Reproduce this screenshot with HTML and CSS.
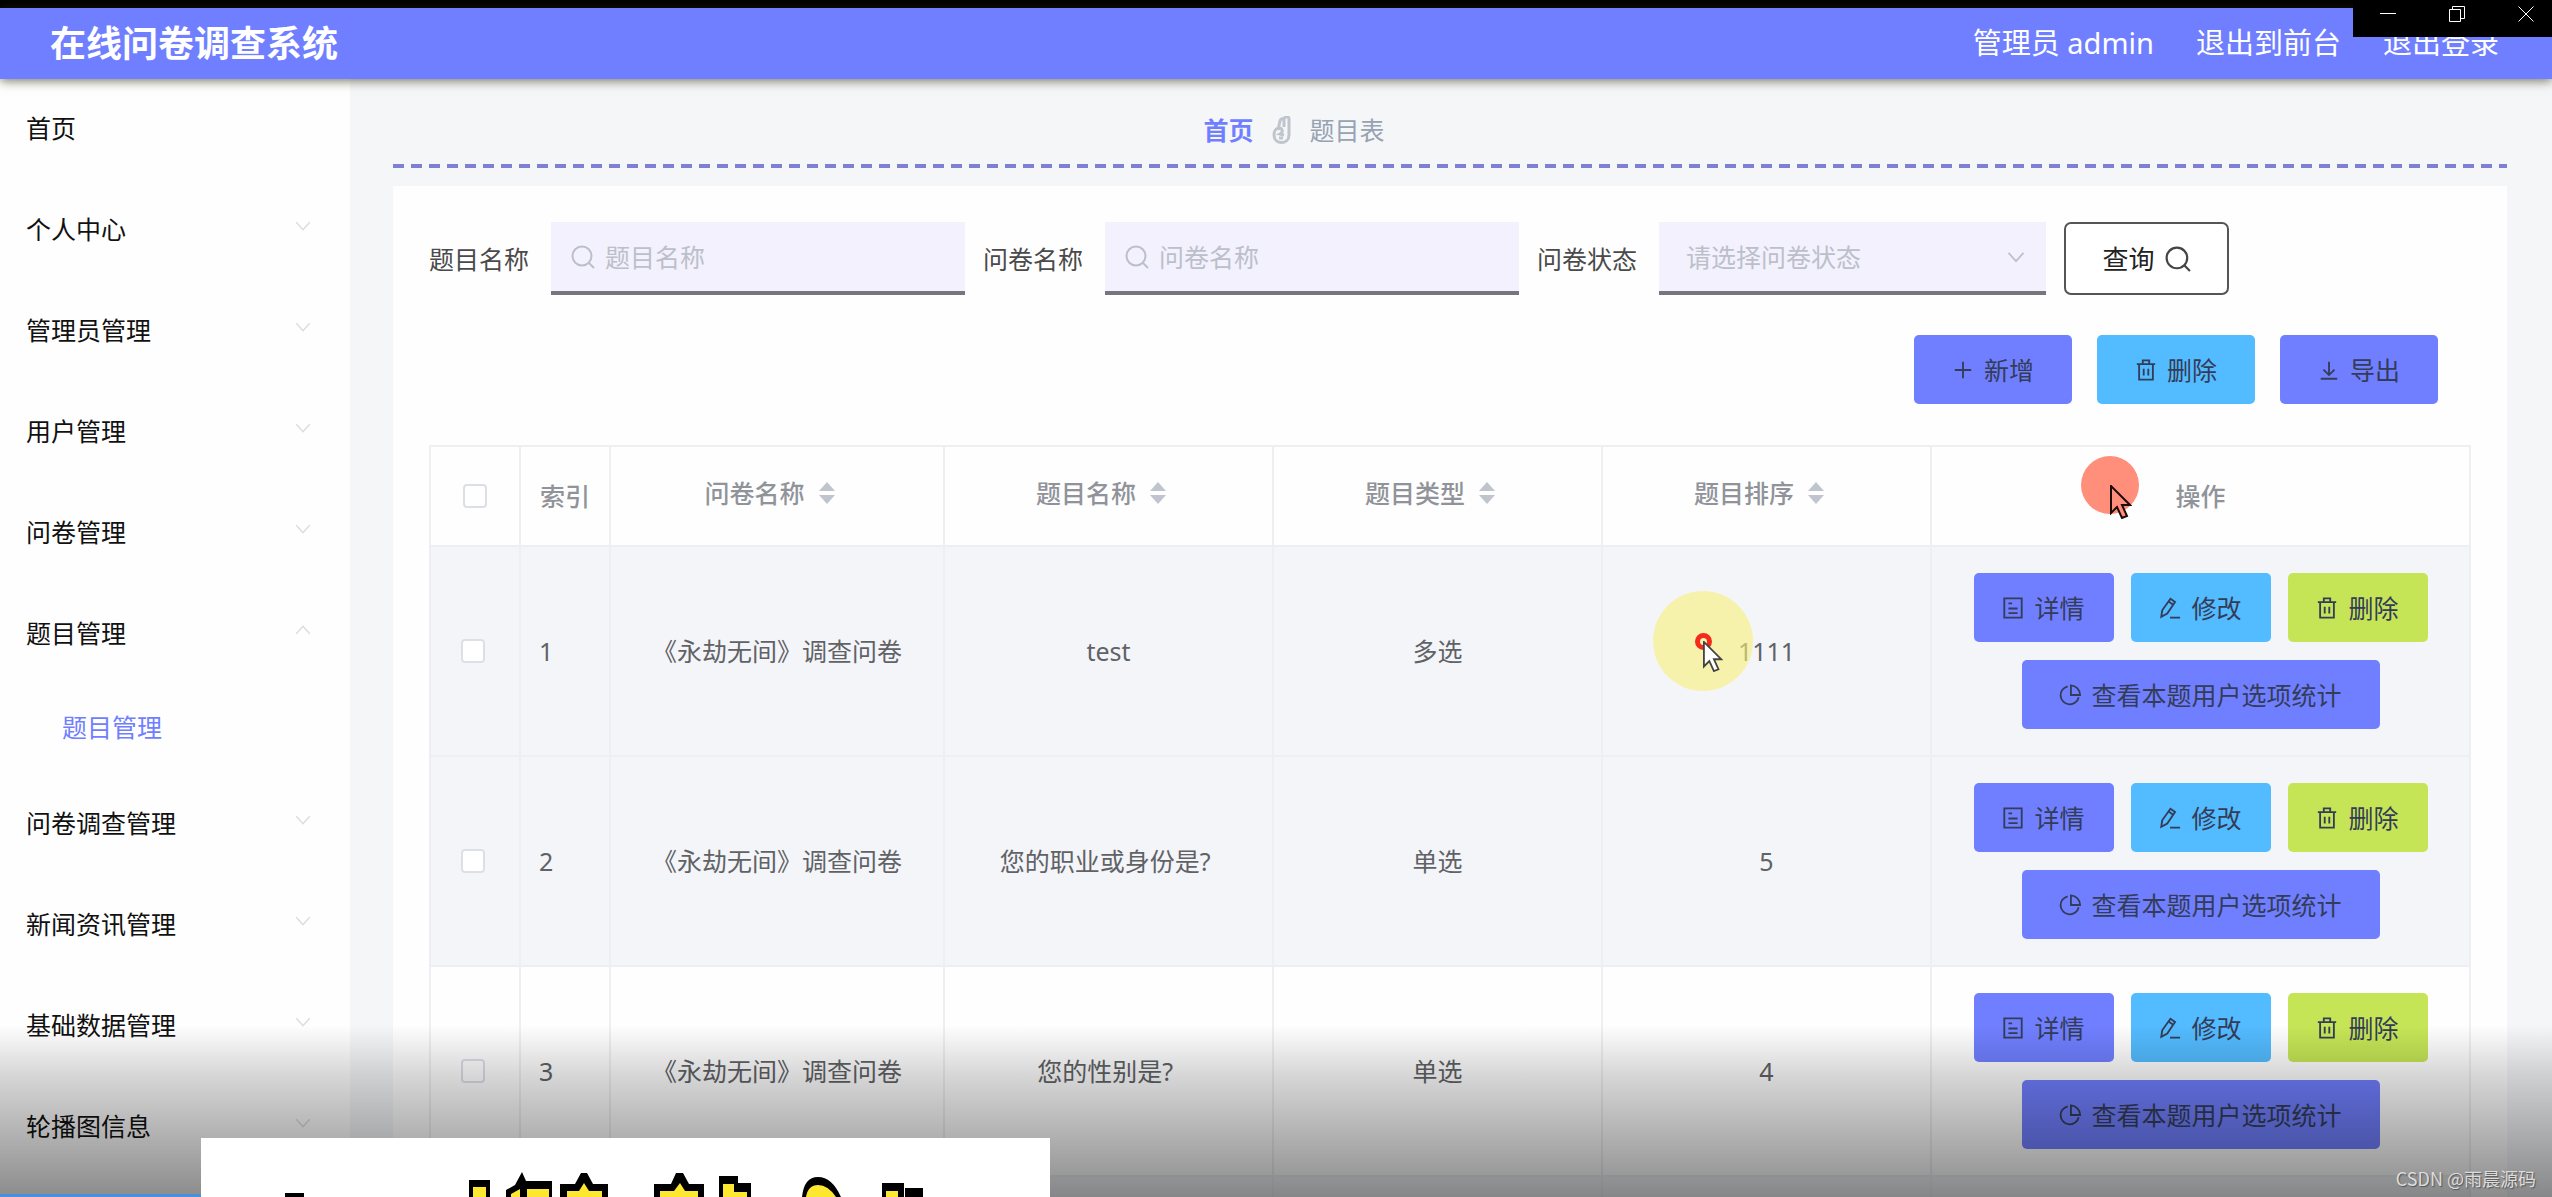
FILE: index.html
```html
<!DOCTYPE html>
<html lang="zh-CN">
<head>
<meta charset="utf-8">
<title>在线问卷调查系统</title>
<link rel="stylesheet" href="styles.css">
</head>
<body>
<svg class="sprite" aria-hidden="true">
  <symbol id="i-search" viewBox="0 0 24 24"><circle cx="11" cy="11" r="9.5"/><path d="M18 18l5 5"/></symbol>
  <symbol id="i-down" viewBox="0 0 24 24"><path d="M3 7l9 10 9-10"/></symbol>
  <symbol id="i-up" viewBox="0 0 24 24"><path d="M3 17l9-10 9 10"/></symbol>
  <symbol id="i-plus" viewBox="0 0 24 24"><path d="M12 3v18M3 12h18"/></symbol>
  <symbol id="i-trash" viewBox="0 0 24 24"><path d="M2 5.500h20M8.500 5V1.500h7V5M4.500 6v16.500h15V6M9.500 10.500v7.500M14.500 10.500v7.500"/></symbol>
  <symbol id="i-export" viewBox="0 0 24 24"><path d="M12 3v14M6 11.500l6 6 6-6M3 21.500h18"/></symbol>
  <symbol id="i-doc" viewBox="0 0 24 24"><path d="M2.500 1.500h19v21h-19zM7 7h4M7 12.500h10M7 17.500h10"/></symbol>
  <symbol id="i-edit" viewBox="0 0 24 24"><path d="M2.500 21.500l1-7L12.500 2l5 3.500L9 18zM10.500 5l5 3.500M12 22.500h11"/></symbol>
  <symbol id="i-pie" viewBox="0 0 24 24"><path d="M9.500 2.500a10 10 0 1 0 12 12M13 1.500v10.500h10A10.500 10.500 0 0 0 13 1.500z"/></symbol>
  <symbol id="i-cursor" viewBox="0 0 22 34"><path d="M1 1v27l6-6 5 11 5-2-5-11h8z"/></symbol>
</svg>

<div class="window-bar">
  <div class="window-controls">
    <button type="button" aria-label="最小化"><svg viewBox="0 0 16 16"><path d="M0 7.500h16"/></svg></button>
    <button type="button" aria-label="还原"><svg viewBox="0 0 16 16"><path d="M.5 3.500h11v12H.5zM3.500 3.500v-3h12v12h-4"/></svg></button>
    <button type="button" aria-label="关闭"><svg viewBox="0 0 16 16"><path d="M.5.5l15 15M15.500.5l-15 15"/></svg></button>
  </div>
</div>

<header class="topbar">
  <h1>在线问卷调查系统</h1>
  <nav>
    <span>管理员 admin</span>
    <a href="#">退出到前台</a>
    <a href="#">退出登录</a>
  </nav>
</header>

<div class="layout">
  <aside class="sidebar">
    <a href="#">首页</a>
    <a href="#">个人中心<svg><use href="#i-down"/></svg></a>
    <a href="#">管理员管理<svg><use href="#i-down"/></svg></a>
    <a href="#">用户管理<svg><use href="#i-down"/></svg></a>
    <a href="#">问卷管理<svg><use href="#i-down"/></svg></a>
    <a href="#">题目管理<svg><use href="#i-up"/></svg></a>
    <a href="#" class="sub">题目管理</a>
    <a href="#">问卷调查管理<svg><use href="#i-down"/></svg></a>
    <a href="#">新闻资讯管理<svg><use href="#i-down"/></svg></a>
    <a href="#">基础数据管理<svg><use href="#i-down"/></svg></a>
    <a href="#">轮播图信息<svg><use href="#i-down"/></svg></a>
  </aside>

  <main>
    <div class="breadcrumb">
      <a href="#">首页</a>
      <svg viewBox="0 0 20 28"><path d="M6 14L8 5c1-3 4-3 4 0M12 11V3c1-3 5-3 5 0v16c0 10-15 10-15 0 0-4 2-7 5-7s5 4 1 6l4 1M7 22h4"/></svg>
      <span>题目表</span>
    </div>
    <div class="divider"></div>

    <section class="card">
      <form class="filters">
        <label for="q-title">题目名称</label>
        <div class="field"><svg><use href="#i-search"/></svg><input id="q-title" type="text" placeholder="题目名称"></div>
        <label for="q-paper">问卷名称</label>
        <div class="field"><svg><use href="#i-search"/></svg><input id="q-paper" type="text" placeholder="问卷名称"></div>
        <label for="q-state">问卷状态</label>
        <div class="field field-select"><select id="q-state"><option>请选择问卷状态</option></select><svg><use href="#i-down"/></svg></div>
        <button type="button" class="query">查询<svg><use href="#i-search"/></svg></button>
      </form>

      <div class="actions">
        <button type="button" class="btn violet"><svg><use href="#i-plus"/></svg>新增</button>
        <button type="button" class="btn blue"><svg><use href="#i-trash"/></svg>删除</button>
        <button type="button" class="btn violet"><svg><use href="#i-export"/></svg>导出</button>
      </div>

      <table>
        <colgroup><col class="c-check"><col class="c-index"><col class="c-paper"><col class="c-mid"><col class="c-mid"><col class="c-mid"><col class="c-ops"></colgroup>
        <thead>
          <tr>
            <th><input type="checkbox" aria-label="全选"></th>
            <th>索引</th>
            <th><span class="sort">问卷名称<i></i></span></th>
            <th><span class="sort">题目名称<i></i></span></th>
            <th><span class="sort">题目类型<i></i></span></th>
            <th><span class="sort">题目排序<i></i></span></th>
            <th>操作</th>
          </tr>
        </thead>
        <tbody>
          <tr class="shade">
            <td class="check"><input type="checkbox" aria-label="选择第1行"></td><td class="index">1</td><td>《永劫无间》调查问卷</td><td>test</td><td>多选</td><td>1111</td>
            <td><div class="ops">
              <button type="button" class="btn violet"><svg><use href="#i-doc"/></svg>详情</button>
              <button type="button" class="btn blue"><svg><use href="#i-edit"/></svg>修改</button>
              <button type="button" class="btn green"><svg><use href="#i-trash"/></svg>删除</button>
              <button type="button" class="btn violet wide"><svg><use href="#i-pie"/></svg>查看本题用户选项统计</button>
            </div></td>
          </tr>
          <tr class="shade">
            <td class="check"><input type="checkbox" aria-label="选择第2行"></td><td class="index">2</td><td>《永劫无间》调查问卷</td><td>您的职业或身份是?&nbsp;</td><td>单选</td><td>5</td>
            <td><div class="ops">
              <button type="button" class="btn violet"><svg><use href="#i-doc"/></svg>详情</button>
              <button type="button" class="btn blue"><svg><use href="#i-edit"/></svg>修改</button>
              <button type="button" class="btn green"><svg><use href="#i-trash"/></svg>删除</button>
              <button type="button" class="btn violet wide"><svg><use href="#i-pie"/></svg>查看本题用户选项统计</button>
            </div></td>
          </tr>
          <tr>
            <td class="check"><input type="checkbox" aria-label="选择第3行"></td><td class="index">3</td><td>《永劫无间》调查问卷</td><td>您的性别是?&nbsp;</td><td>单选</td><td>4</td>
            <td><div class="ops">
              <button type="button" class="btn violet"><svg><use href="#i-doc"/></svg>详情</button>
              <button type="button" class="btn blue"><svg><use href="#i-edit"/></svg>修改</button>
              <button type="button" class="btn green"><svg><use href="#i-trash"/></svg>删除</button>
              <button type="button" class="btn violet wide"><svg><use href="#i-pie"/></svg>查看本题用户选项统计</button>
            </div></td>
          </tr>
          <tr class="shade next"><td></td><td></td><td></td><td></td><td></td><td></td><td></td></tr>
        </tbody>
      </table>
    </section>
  </main>
</div>

<div class="pointer pointer-yellow"><i></i><svg><use href="#i-cursor"/></svg></div>
<div class="pointer pointer-red"><svg><use href="#i-cursor"/></svg></div>
<div class="shadow"></div>
<div class="progress"></div>
<div class="banner">
  <svg viewBox="0 0 849 59">
    <path class="ink" d="M84 59v-4h19v4zM268 59V42h21v17zM305 59V52l9-5 7-13 4 9h26v16zM359 59V46h15l6-11h6l6 11h15v13zM453 59V46h17l5-11h7l6 11h15v13zM518 59V38h19v7h13v14zM601 59q2-20 16-20t23 20zM681 59V45h22v14zM704 59V50h18v9z"/>
    <path class="sun" d="M272 59V49h13v10zM310 59v-3l9-5v8zM326 59V51h22v8zM366 59V53h12l5-8 5 8h13v6zM459 59V53h14l6-8 5 8h13v6zM522 59V46h11v8h13v5zM605 59q2-12 12-12t18 12zM685 59V53h12v6z"/>
  </svg>
</div>
<div class="watermark">CSDN @雨晨源码</div>
</body>
</html>
```

FILE: styles.css
```css
* { box-sizing: border-box; }

html, body { height: 100%; }

body {
  margin: 0;
  display: flex;
  flex-direction: column;
  overflow: hidden;
  position: relative;
  background: #f5f6f8;
  color: #606266;
  font: 25px/36px "Noto Sans", "Noto Sans CJK SC", sans-serif;
}

a { color: inherit; text-decoration: none; }
button, input, select { font: inherit; color: inherit; margin: 0; }
svg { fill: none; stroke: currentColor; stroke-width: 2; flex: none; }
.sprite { display: none; }

/* window frame */
.window-bar { flex: none; height: 8px; background: #000; }

.window-controls {
  position: absolute;
  top: 0;
  right: 0;
  z-index: 5;
  display: flex;
  overflow: hidden;
  width: 199px;
  height: 37px;
  padding-bottom: 9px;
  background: #000;
}

.window-controls button {
  display: grid;
  place-items: center;
  flex: none;
  width: 69px;
  padding: 0;
  border: 0;
  background: none;
  color: #fff;
}

.window-controls svg { width: 16px; height: 16px; stroke-width: 1; }

/* header */
.topbar {
  flex: none;
  display: flex;
  align-items: center;
  justify-content: space-between;
  height: 71px;
  padding: 0 53px 0 50px;
  background: #707fff;
  color: #fff;
  box-shadow: 0 2px 10px rgba(50, 50, 20, .65);
  z-index: 2;
}

.topbar h1 { margin: 0; font-size: 36px; line-height: 48px; }
.topbar nav { display: flex; gap: 42px; padding-bottom: 2px; font-size: 29px; line-height: 40px; }

/* layout */
.layout { flex: 1; display: flex; min-height: 0; }

.sidebar {
  flex: none;
  width: 350px;
  background: #fefefe;
  color: #111;
}

.sidebar a {
  display: flex;
  align-items: center;
  justify-content: space-between;
  height: 101px;
  padding: 0 38px 3px 26px;
}

.sidebar svg { width: 18px; height: 18px; margin-bottom: 6px; color: #ddd; }
.sidebar .sub { height: 89px; padding: 0 38px 6px 62px; color: #707fff; }

main { flex: 1; min-width: 0; padding: 33px 45px 0 43px; }

.breadcrumb {
  display: flex;
  align-items: center;
  justify-content: center;
  gap: 18px;
  padding-right: 312px;
  color: #97a2b2;
}

.breadcrumb a { color: #707fff; font-weight: 700; }
.breadcrumb svg { width: 20px; height: 28px; color: #c0c4cc; stroke-width: 3; }

.divider {
  height: 4px;
  margin: 16px 0 18px;
  background: repeating-linear-gradient(90deg, #7f80d4 0 11px, transparent 11px 18px);
}

.card { padding: 36px; background: #fefefe; }

/* filters */
.filters { display: flex; align-items: center; color: #4a4a4a; }
.filters label { margin-right: 22px; }

.field {
  display: flex;
  align-items: center;
  gap: 10px;
  width: 414px;
  height: 73px;
  margin-right: 18px;
  padding: 0 20px;
  background: #f2f1fd;
  border-bottom: 4px solid #76777c;
  color: #bcbfc9;
}

.field svg { width: 24px; height: 24px; }
.field input, .field select {
  flex: 1;
  min-width: 0;
  padding: 0;
  border: 0;
  outline: 0;
  background: none;
  appearance: none;
}
.field input::placeholder { color: #bcbfc9; opacity: 1; }
.field-select { width: 387px; padding-left: 27px; }
.field-select svg { width: 20px; height: 20px; }

.query {
  display: flex;
  align-items: center;
  justify-content: center;
  gap: 10px;
  width: 165px;
  height: 73px;
  border: 2px solid #555;
  border-radius: 7px;
  background: #fff;
  color: #222;
  font-size: 26px;
}
.query svg { width: 26px; height: 26px; color: #444; }

/* buttons */
.btn {
  display: flex;
  align-items: center;
  justify-content: center;
  gap: 10px;
  height: 69px;
  padding: 0;
  border: 0;
  border-radius: 5px;
  color: #333c58;
}
.btn svg { width: 22px; height: 24px; }
.violet { background: #707fff; }
.blue { background: #53bbff; }
.green { background: #c6e556; }

.actions {
  display: flex;
  justify-content: flex-end;
  gap: 25px;
  padding: 40px 33px 41px 0;
}
.actions .btn { width: 158px; }

/* table */
table {
  width: 100%;
  table-layout: fixed;
  border-collapse: collapse;
  text-align: center;
}
.c-check, .c-index { width: 90px; }
.c-paper { width: 334px; }
.c-mid { width: 329px; }

th, td { padding: 0; border: 2px solid #eeeff3; }
th { height: 100px; color: #909399; font-weight: 500; }
td { height: 210px; }
.shade { background: #f4f5f9; }
.next td { height: 60px; }
.index { padding-left: 18px; text-align: left; }
.check { padding-right: 5px; }

table input {
  appearance: none;
  display: block;
  width: 24px;
  height: 24px;
  border: 2px solid #dcdfe6;
  border-radius: 4px;
  background: #fff;
}
th input, td input { margin: 0 auto; }

.sort {
  display: inline-flex;
  align-items: center;
  gap: 14px;
  padding: 0 15px 6px 0;
}
.sort i { display: grid; gap: 4px; }
.sort i::before, .sort i::after {
  content: "";
  border: 8px solid transparent;
  border-top-width: 0;
  border-bottom: 9px solid #c0c4cc;
}
.sort i::after {
  border-top: 9px solid #c0c4cc;
  border-bottom-width: 0;
}

.ops {
  display: flex;
  flex-wrap: wrap;
  justify-content: center;
  gap: 18px 17px;
}
.ops .btn { width: 140px; }
.ops .wide { width: 358px; }

/* recorded pointers */
.pointer { position: absolute; z-index: 3; border-radius: 50%; }
.pointer svg { position: absolute; left: 50%; top: 50%; width: 22px; height: 34px; }
.pointer-yellow {
  left: 1653px;
  top: 591px;
  width: 100px;
  height: 100px;
  background: rgba(246, 240, 120, .6);
}
.pointer-yellow i {
  position: absolute;
  inset: 42px;
  width: 17px;
  height: 17px;
  border: 5px solid #f32a1c;
  border-radius: 50%;
}
.pointer-yellow svg { fill: #fff; color: #444; width: 20px; height: 31px; }
.pointer-red {
  left: 2081px;
  top: 456px;
  width: 58px;
  height: 58px;
  background: #ff8f7a;
}
.pointer-red svg { fill: #ff8f7a; color: #1c0c0c; stroke-width: 2; }

/* video overlay */
.shadow {
  position: absolute;
  inset: auto 0 0;
  z-index: 3;
  height: 172px;
  background: linear-gradient(rgba(0, 0, 0, 0), rgba(0, 0, 0, .16) 30%, rgba(0, 0, 0, .45));
  pointer-events: none;
}
.progress {
  position: absolute;
  left: 0;
  bottom: 0;
  z-index: 4;
  width: 201px;
  height: 3px;
  background: #4a90d9;
}
.banner {
  position: absolute;
  left: 201px;
  bottom: 0;
  z-index: 4;
  width: 849px;
  height: 59px;
  background: #fff;
}
.banner svg { display: block; width: 100%; height: 100%; }
.ink { fill: #000; stroke: none; }
.sun { fill: #fde72f; stroke: none; }
.watermark {
  position: absolute;
  right: 16px;
  bottom: 6px;
  z-index: 4;
  color: #dcdcdc;
  font: 18px/26px "Noto Sans CJK SC", sans-serif;
  text-shadow: 1px 1px 1px #555;
}
```
